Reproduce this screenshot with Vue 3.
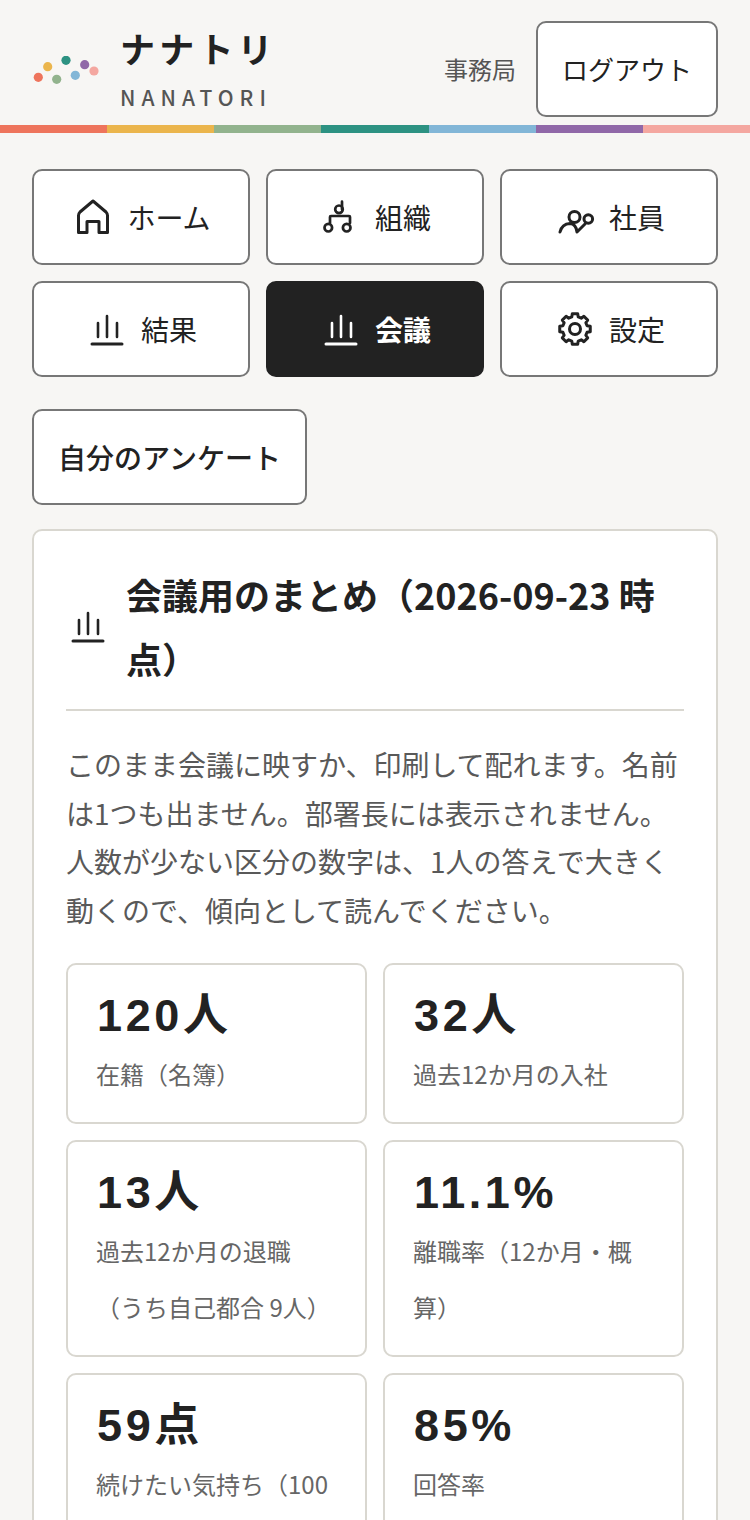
<template>
  <div class="page">
    <header class="head">
      <div class="brand">
        <svg class="logo" width="72" height="32" viewBox="0 0 72 32">
          <circle v-for="d in dots" :key="d.c" :cx="d.x" :cy="d.y" r="4.6" :fill="d.c" />
        </svg>
        <div class="brand-text">
          <div class="brand-ja">ナナトリ</div>
          <div class="brand-en">NANATORI</div>
        </div>
      </div>
      <div class="user">
        <span class="role">事務局</span>
        <button class="btn logout">ログアウト</button>
      </div>
    </header>
    <div class="stripe">
      <i v-for="d in dots" :key="d.c" :style="{ background: d.c }"></i>
    </div>

    <nav class="nav">
      <button v-for="n in nav" :key="n.label" class="btn nav-btn" :class="{ on: n.on }">
        <svg class="ico" viewBox="0 0 40 40" fill="none" stroke="currentColor" stroke-width="3" stroke-linecap="round" stroke-linejoin="round">
          <template v-if="n.icon === 'home'">
            <path d="M5.5 35.5V18.5Q5.5 16.5 7 15L20 4L33 15Q34.500 16.500 34.500 18.5V35.500H26V24.500H14V35.500Z" />
          </template>
          <template v-else-if="n.icon === 'org'">
            <g stroke-width="2.700">
              <circle cx="18" cy="12.300" r="3.800" />
              <path d="M21 4.700V12.300M9 26V20Q9 19 10 19H28Q29 19 29 20V26" />
              <circle cx="7.300" cy="30.700" r="3.800" />
              <circle cx="25.700" cy="30.700" r="3.800" />
            </g>
          </template>
          <template v-else-if="n.icon === 'users'">
            <circle cx="19.500" cy="20" r="5.500" />
            <circle cx="33.300" cy="22" r="4.300" />
            <path d="M5 35Q7 27 15 26.500Q21 27 22 35L30 27" />
          </template>
          <template v-else-if="n.icon === 'gear'">
            <path :d="gearPath" />
            <circle cx="20" cy="20" r="5.500" />
          </template>
          <template v-else>
            <path d="M5 35H35" />
            <path class="thin" d="M11 14V28M20 7V28M30 14V28" />
          </template>
        </svg>
        <span>{{ n.label }}</span>
      </button>
    </nav>

    <div class="sub-nav">
      <button class="btn survey">自分のアンケート</button>
    </div>

    <section class="card">
      <h2 class="title">
        <svg class="ico" viewBox="0 0 40 40" fill="none" stroke="currentColor" stroke-width="3" stroke-linecap="round">
          <path d="M5 35H35" />
          <path class="thin" d="M11 14V28M20 7V28M30 14V28" />
        </svg>
        <span>会議用のまとめ（2026-09-23 時点）</span>
      </h2>
      <p class="lead">このまま会議に映すか、印刷して配れます。名前は1つも出ません。部署長には表示されません。人数が少ない区分の数字は、1人の答えで大きく動くので、傾向として読んでください。</p>
      <div class="stats">
        <div v-for="s in stats" :key="s.value" class="stat">
          <div class="value">{{ s.value }}</div>
          <div class="label">{{ s.label }}</div>
        </div>
      </div>
    </section>
  </div>
</template>

<script setup>
const dots = [
  { x: 6.300, y: 21.300, c: '#ee745c' },
  { x: 15.700, y: 10.700, c: '#ebb54c' },
  { x: 24.700, y: 23.300, c: '#92b38d' },
  { x: 34, y: 4.300, c: '#2d9282' },
  { x: 43.300, y: 19.300, c: '#82b6d7' },
  { x: 52.700, y: 8.700, c: '#9068a8' },
  { x: 62, y: 15, c: '#f4a7a0' },
]

const nav = [
  { label: 'ホーム', icon: 'home' },
  { label: '組織', icon: 'org' },
  { label: '社員', icon: 'users' },
  { label: '結果', icon: 'bars' },
  { label: '会議', icon: 'bars', on: true },
  { label: '設定', icon: 'gear' },
]

const stats = [
  { value: '120人', label: '在籍（名簿）' },
  { value: '32人', label: '過去12か月の入社' },
  { value: '13人', label: '過去12か月の退職（うち自己都合 9人）' },
  { value: '11.1%', label: '離職率（12か月・概算）' },
  { value: '59点', label: '続けたい気持ち（100点満点）' },
  { value: '85%', label: '回答率' },
]

// eight teeth around the centre of the 40px icon box
const polar = (r, deg) => {
  const a = (deg * Math.PI) / 180
  return `${(20 + r * Math.cos(a)).toFixed(2)} ${(20 + r * Math.sin(a)).toFixed(2)}`
}
const gearPath = Array.from({ length: 8 }, (_, i) => {
  const a = i * 45 - 90
  return `L${polar(12.5, a - 15)}L${polar(15.5, a - 10)}L${polar(15.5, a + 10)}L${polar(12.5, a + 15)}`
}).join('').replace('L', 'M') + 'Z'
</script>

<style>
html, body { height: 1520px; overflow: hidden; background: #f7f6f4; }
</style>

<style scoped>
.page { font-family: "Noto Sans CJK JP", sans-serif; color: #222; background: #f7f6f4; }
.head { display: flex; justify-content: space-between; align-items: center; height: 125px; padding: 12px 32px 0; box-sizing: border-box; }
.brand { display: flex; align-items: center; gap: 16px; }
.logo { display: block; margin-top: 6px; }
.brand-text { padding-bottom: 4px; }
.brand-ja { font-size: 35px; font-weight: 700; letter-spacing: 4.200px; line-height: 50px; }
.brand-en { font-size: 21px; font-weight: 500; letter-spacing: 6px; line-height: 28px; margin-top: 10px; color: #555; }
.user { display: flex; align-items: center; gap: 20px; }
.role { font-size: 24px; color: #555; }
.btn { font-family: inherit; color: #222; background: #fff; border: 2px solid #777; border-radius: 10px; height: 96px; box-sizing: border-box; padding: 0 24px; cursor: pointer; }
.logout { font-size: 26px; }
.stripe { display: flex; height: 8px; }
.stripe i { flex: 1; }
.nav { display: grid; grid-template-columns: repeat(3, 1fr); gap: 16px; padding: 36px 32px 0; }
.nav-btn { display: flex; align-items: center; justify-content: center; gap: 14px; font-size: 28px; padding: 0 0 0 2px; }
.nav-btn.on { background: #222; border-color: #222; color: #fff; font-weight: 700; }
.ico { width: 40px; height: 40px; flex: none; }
.thin { stroke-width: 2.600; }
.sub-nav { padding: 32px 32px 0; }
.survey { font-size: 28px; font-weight: 500; }
.card { margin: 24px 32px 0; padding: 31px 32px 32px; background: #fff; border: 2px solid #d9d7d0; border-radius: 10px; }
.title { display: flex; align-items: center; gap: 18px; margin: 0; padding: 0 0 19px 2px; border-bottom: 2px solid #d9d7d0; font-size: 36px; font-weight: 700; line-height: 64px; }
.lead { margin: 29px 0 0; font-size: 28px; line-height: 48.670px; color: #595959; }
.stats { display: grid; grid-template-columns: 1fr 1fr; gap: 16px; margin-top: 28px; }
.stat { border: 2px solid #d9d7d0; border-radius: 10px; padding: 20px 28px; }
.value { font-family: "Liberation Sans", "Noto Sans CJK JP", sans-serif; font-size: 45px; font-weight: 700; letter-spacing: 3.600px; line-height: 61px; margin-left: 1px; }
.label { font-size: 24px; line-height: 56px; color: #666; }
</style>
